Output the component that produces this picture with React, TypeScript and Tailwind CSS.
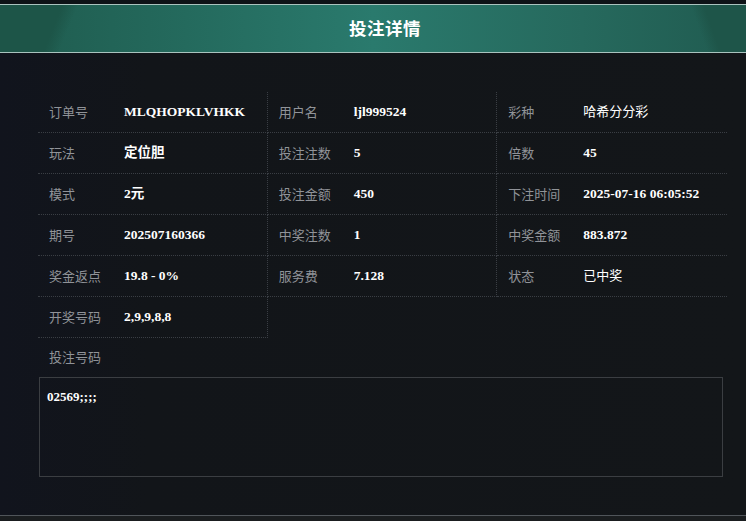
import React from "react";

const serif = { fontFamily: '"Liberation Serif", "Noto Sans CJK SC", serif' };

type Cell = { label: string; value: string; normal?: boolean };

const rows: Cell[][] = [
  [
    { label: "订单号", value: "MLQHOPKLVHKK" },
    { label: "用户名", value: "ljl999524" },
    { label: "彩种", value: "哈希分分彩", normal: true },
  ],
  [
    { label: "玩法", value: "定位胆" },
    { label: "投注注数", value: "5" },
    { label: "倍数", value: "45" },
  ],
  [
    { label: "模式", value: "2元" },
    { label: "投注金额", value: "450" },
    { label: "下注时间", value: "2025-07-16 06:05:52" },
  ],
  [
    { label: "期号", value: "202507160366" },
    { label: "中奖注数", value: "1" },
    { label: "中奖金额", value: "883.872" },
  ],
  [
    { label: "奖金返点", value: "19.8 - 0%" },
    { label: "服务费", value: "7.128" },
    { label: "状态", value: "已中奖", normal: true },
  ],
];

function CellView({ c, right }: { c: Cell; right: boolean }) {
  return (
    <div
      className={`h-[41px] flex items-center pl-[11px] border-b border-dotted border-[#3a3e44] ${
        right ? "border-r" : ""
      }`}
    >
      <span className="w-[75px] shrink-0 text-[13px] text-[#909398]">{c.label}</span>
      <span
        className={`text-white ${c.normal ? "font-normal text-[13px]" : "font-bold text-[13.5px]"}`}
        style={serif}
      >
        {c.value}
      </span>
    </div>
  );
}

export default function App() {
  return (
    <div
      className="w-[746px] h-[521px] bg-[#121519] flex flex-col overflow-hidden"
      style={{ fontFamily: '"Noto Sans CJK SC", "Noto Sans", sans-serif' }}
    >
      <div className="h-[4px] bg-[#0e1317]" />
      <div className="h-[1px] bg-[#a9c3be]" />
      <div
        className="relative h-[47px] flex items-center justify-center overflow-hidden"
        style={{
          background:
            "linear-gradient(90deg, #1f5b4e 0%, #246a5d 25%, #2a7a6d 50%, #26695d 78%, #205b50 100%)",
        }}
      >
        <div
          className="absolute left-0 top-0 h-full w-[85px]"
          style={{
            background: "linear-gradient(112deg, #1d5548 60%, rgba(35,100,88,0) 75%)",
          }}
        />
        <div
          className="absolute right-0 top-0 h-full w-[60px]"
          style={{
            background: "linear-gradient(250deg, #1e5549 55%, rgba(35,96,86,0) 72%)",
          }}
        />
        <span className="relative ml-[24px] text-[17.5px] font-bold text-white tracking-[0.5px]">
          投注详情
        </span>
      </div>
      <div className="h-[1px] bg-[#a9c3be]" />

      <div
        className="flex-1 flex flex-col"
        style={{ background: "linear-gradient(90deg, #11141d 0%, #121519 20%, #131619 100%)" }}
      >
        <div className="ml-[38px] mt-[39px] w-[689px] grid grid-cols-3">
          {rows.map((r, i) =>
            r.map((c, j) => <CellView key={`${i}-${j}`} c={c} right={j < 2} />)
          )}
          <CellView c={{ label: "开奖号码", value: "2,9,9,8,8" }} right={true} />
        </div>
        <div className="ml-[49px] mt-[9px] text-[13px] text-[#909398] leading-[20px]">投注号码</div>
        <div className="ml-[39px] mt-[10px] w-[684px] h-[100px] border border-[#3b3e42] px-[7px] pt-[4px]">
          <span className="text-[13px] font-bold text-white leading-[20px]" style={serif}>
            02569;;;;
          </span>
        </div>
        <div className="flex-1" />
      </div>
      <div className="h-[1px] bg-[#50555a]" />
      <div className="h-[5px] bg-[#1a1d1f]" />
    </div>
  );
}
